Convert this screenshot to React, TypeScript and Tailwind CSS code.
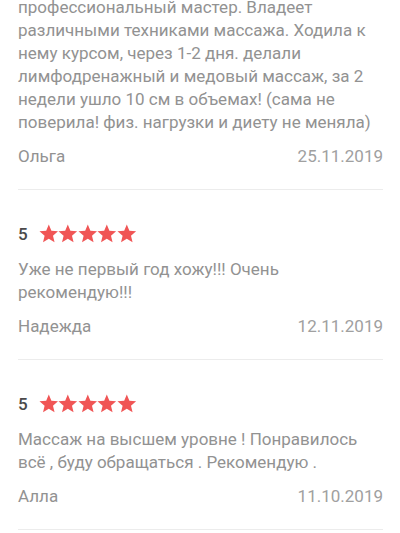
import React from 'react';

type Review = {
  rating?: number;
  text: string;
  name: string;
  date: string;
};

const reviews: Review[] = [
  {
    text: 'профессиональный мастер. Владеет различными техниками массажа. Ходила к нему курсом, через 1-2 дня. делали лимфодренажный и медовый массаж, за 2 недели ушло 10 см в объемах! (сама не поверила! физ. нагрузки и диету не меняла)',
    name: 'Ольга',
    date: '25.11.2019',
  },
  {
    rating: 5,
    text: 'Уже не первый год хожу!!! Очень рекомендую!!!',
    name: 'Надежда',
    date: '12.11.2019',
  },
  {
    rating: 5,
    text: 'Массаж на высшем уровне ! Понравилось всё , буду обращаться . Рекомендую .',
    name: 'Алла',
    date: '11.10.2019',
  },
];

function Star() {
  return (
    <svg viewBox="0 0 20 20" className="w-[19.6px] h-[19.6px]" fill="#f05555">
      <path d="M10 0.5L12.65 6.86L19.51 7.41L14.28 11.89L15.88 18.59L10 15L4.12 18.59L5.72 11.89L0.49 7.41L7.35 6.86Z" />
    </svg>
  );
}

function ReviewItem({ review, first }: { review: Review; first: boolean }) {
  return (
    <div className={`border-b border-[#ececec] ${first ? 'pb-[21px]' : 'pt-[34px] pb-[21px]'}`}>
      {review.rating && (
        <div className="flex items-center h-[20px] mb-[14px]">
          <span className="text-[17px] font-medium text-[#4a4a4a] mr-[11px] leading-none">{review.rating}</span>
          <div className="flex">
            {Array.from({ length: review.rating }).map((_, i) => (
              <Star key={i} />
            ))}
          </div>
        </div>
      )}
      <p className="text-[17px] leading-[23px] text-[#929292]">{review.text}</p>
      <div className="flex justify-between items-center mt-[11px] text-[17px] leading-[23px]">
        <span className="text-[#929292]">{review.name}</span>
        <span className="text-[#a0a0a0]">{review.date}</span>
      </div>
    </div>
  );
}

export default function App() {
  return (
    <div className="w-[400px] h-[533px] overflow-hidden bg-white" style={{ fontFamily: 'Roboto, sans-serif' }}>
      <div className="pl-[18px] pr-[17px] -mt-[4px]">
        {reviews.map((r, i) => (
          <ReviewItem key={i} review={r} first={i === 0} />
        ))}
      </div>
    </div>
  );
}
